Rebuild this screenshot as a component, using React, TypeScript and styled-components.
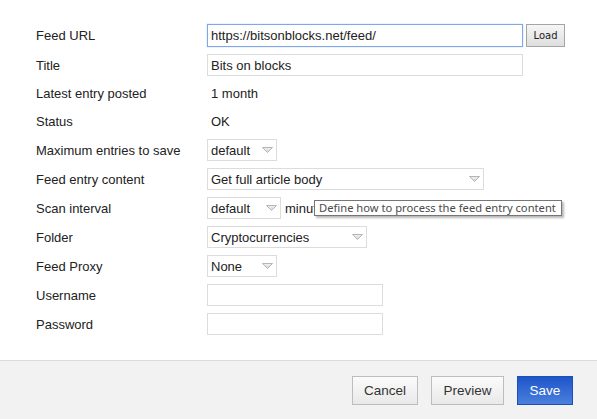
import React from "react";
import styled, { createGlobalStyle } from "styled-components";

const Global = createGlobalStyle`
  html, body { margin: 0; padding: 0; background: #fff; }
  body { font-family: "Liberation Sans", Arial, sans-serif; font-size: 13px; color: #222; }
  * { box-sizing: border-box; }
`;

const Page = styled.div`
  width: 597px;
  height: 419px;
  display: flex;
  flex-direction: column;
  background: #fff;
  overflow: hidden;
`;

const Form = styled.div`
  display: grid;
  grid-template-columns: 171px 1fr;
  align-content: start;
  row-gap: 7px;
  padding: 24px 0 0 36px;
  flex: 1;
`;

const Label = styled.div<{ $h?: number }>`
  height: ${(p) => p.$h ?? 22}px;
  display: flex;
  align-items: center;
  font-size: 13px;
  color: #222;
`;

const Cell = styled.div<{ $h?: number }>`
  height: ${(p) => p.$h ?? 22}px;
  display: flex;
  align-items: center;
  position: relative;
`;

const TextInput = styled.div<{ $w: number; $focus?: boolean }>`
  width: ${(p) => p.$w}px;
  height: ${(p) => (p.$focus ? 23 : 22)}px;
  border: 1px solid ${(p) => (p.$focus ? "#7ea8e6" : "#dcdcdc")};
  box-shadow: ${(p) => (p.$focus ? "0 0 1px 0 #8fb6ee" : "none")};
  background: #fff;
  padding: 0 3px;
  display: flex;
  align-items: center;
  font-size: 13px;
  color: #222;
`;

const Value = styled.span`
  padding-left: 4px;
  font-size: 13px;
  color: #222;
`;

const SmallButton = styled.button`
  margin-left: 3px;
  width: 39px;
  height: 23px;
  border: 1px solid #a5a5a5;
  background: linear-gradient(#f6f6f6, #dedede);
  font-family: "DejaVu Sans", Tahoma, sans-serif;
  font-size: 10px;
  color: #222;
  padding: 0;
`;

const SelectBox = styled.div<{ $w: number }>`
  width: ${(p) => p.$w}px;
  height: 22px;
  border: 1px solid #dcdcdc;
  background: #fff;
  display: flex;
  align-items: center;
  justify-content: space-between;
  padding: 0 3px 0 3px;
  font-size: 13px;
  color: #222;
`;

const Suffix = styled.span`
  margin-left: 4px;
  width: 30px;
  overflow: hidden;
  white-space: nowrap;
  font-size: 13px;
  color: #222;
`;

const Tooltip = styled.div`
  position: absolute;
  left: 107px;
  top: 3px;
  height: 16px;
  padding: 0 5px 0 4px;
  border: 1px solid #767676;
  background: #fff;
  box-shadow: 2px 2px 2px rgba(0, 0, 0, 0.28);
  font-family: "Noto Sans", "Open Sans", sans-serif;
  font-size: 11.2px;
  line-height: 14px;
  color: #4a4a4a;
  white-space: nowrap;
`;

const Footer = styled.div`
  height: 59px;
  border-top: 1px solid #dcdcdc;
  background: #f2f2f2;
  display: flex;
  justify-content: flex-end;
  align-items: flex-start;
  gap: 13px;
  padding: 15px 24px 0 0;
`;

const Btn = styled.button<{ $primary?: boolean; $w: number }>`
  width: ${(p) => p.$w}px;
  height: 29px;
  padding: 0;
  font-family: "Liberation Sans", Arial, sans-serif;
  font-size: 13.5px;
  border: 1px solid ${(p) => (p.$primary ? "#1d4fb4" : "#bdbdbd")};
  background: ${(p) =>
    p.$primary ? "linear-gradient(#1e55c9, #4a80dd)" : "linear-gradient(#fbfbfb, #e9e9e9)"};
  color: ${(p) => (p.$primary ? "#fff" : "#333")};
`;

const Arrow = () => (
  <svg width="11" height="6" viewBox="0 0 11 6">
    <defs>
      <linearGradient id="ag" x1="0" y1="0" x2="0" y2="1">
        <stop offset="0" stopColor="#f2f2f2" />
        <stop offset="1" stopColor="#d4d4d4" />
      </linearGradient>
    </defs>
    <polygon points="0.5,0.5 10.5,0.5 5.5,5.5" fill="url(#ag)" stroke="#b5b5b5" strokeWidth="1" />
  </svg>
);

const Select = ({ w, value }: { w: number; value: string }) => (
  <SelectBox $w={w}>
    <span>{value}</span>
    <Arrow />
  </SelectBox>
);

export default function App() {
  return (
    <Page>
      <Global />
      <Form>
        <Label $h={23}>Feed URL</Label>
        <Cell $h={23}>
          <TextInput $w={316} $focus>https://bitsonblocks.net/feed/</TextInput>
          <SmallButton>Load</SmallButton>
        </Cell>

        <Label>Title</Label>
        <Cell>
          <TextInput $w={316}>Bits on blocks</TextInput>
        </Cell>

        <Label $h={21}>Latest entry posted</Label>
        <Cell $h={21}>
          <Value>1 month</Value>
        </Cell>

        <Label $h={21}>Status</Label>
        <Cell $h={21}>
          <Value>OK</Value>
        </Cell>

        <Label>Maximum entries to save</Label>
        <Cell>
          <Select w={70} value="default" />
        </Cell>

        <Label>Feed entry content</Label>
        <Cell>
          <Select w={277} value="Get full article body" />
        </Cell>

        <Label>Scan interval</Label>
        <Cell>
          <Select w={74} value="default" />
          <Suffix>minutes</Suffix>
          <Tooltip>Define how to process the feed entry content</Tooltip>
        </Cell>

        <Label>Folder</Label>
        <Cell>
          <Select w={160} value="Cryptocurrencies" />
        </Cell>

        <Label>Feed Proxy</Label>
        <Cell>
          <Select w={70} value="None" />
        </Cell>

        <Label>Username</Label>
        <Cell>
          <TextInput $w={176} />
        </Cell>

        <Label>Password</Label>
        <Cell>
          <TextInput $w={176} />
        </Cell>
      </Form>
      <Footer>
        <Btn $w={66}>Cancel</Btn>
        <Btn $w={73}>Preview</Btn>
        <Btn $w={56} $primary>Save</Btn>
      </Footer>
    </Page>
  );
}
